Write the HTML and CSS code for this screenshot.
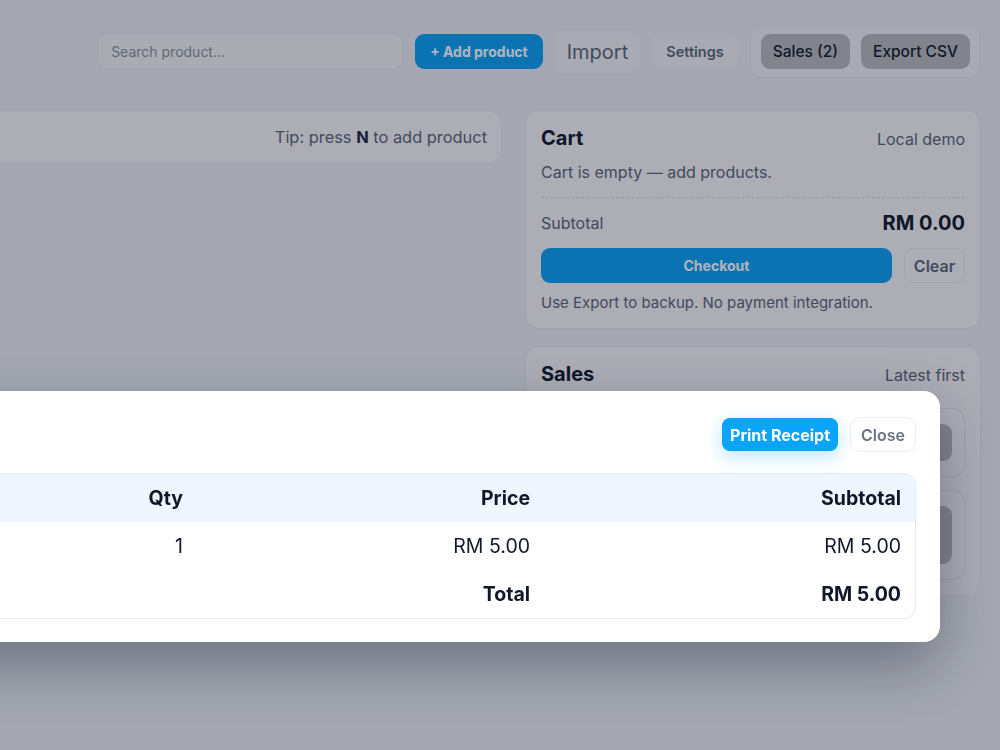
FILE: index.html
```html
<!DOCTYPE html>
<html lang="en">
<head>
    <meta charset="UTF-8">
    <meta name="viewport" content="width=device-width, initial-scale=1.0">
    <title>Kedai POS</title>
    <link rel="stylesheet" href="styles.css">
</head>
<body>
    <div class="app">
        <header class="topbar">
            <div class="brand"></div>
            <div class="actions">
                <input class="search" type="text" placeholder="Search product...">
                <button class="btn btn-primary">+ Add product</button>
                <button class="btn btn-import">Import</button>
                <button class="btn btn-light">Settings</button>
                <div class="btn-group">
                    <button class="btn btn-grey">Sales (2)</button>
                    <button class="btn btn-grey">Export CSV</button>
                </div>
            </div>
        </header>

        <main class="layout">
            <section class="products">
                <div class="panel tip-bar">
                    <span class="tip">Tip: press <b>N</b> to add product</span>
                </div>
            </section>

            <aside class="side">
                <div class="panel card">
                    <div class="card-head">
                        <h2>Cart</h2>
                        <span>Local demo</span>
                    </div>
                    <p class="empty">Cart is empty — add products.</p>
                    <div class="divider"></div>
                    <div class="subtotal">
                        <span>Subtotal</span>
                        <strong>RM 0.00</strong>
                    </div>
                    <div class="cart-actions">
                        <button class="btn btn-checkout">Checkout</button>
                        <button class="btn btn-clear">Clear</button>
                    </div>
                    <p class="note">Use Export to backup. No payment integration.</p>
                </div>

                <div class="panel card">
                    <div class="card-head">
                        <h2>Sales</h2>
                        <span>Latest first</span>
                    </div>
                    <div class="sale-list">
                        <div class="sale-item">
                            <div>
                                <div class="sale-no">#2 · RM 5.00</div>
                                <div class="sale-date">12/05/2024, 10:42</div>
                            </div>
                            <button class="btn btn-grey btn-view">View</button>
                        </div>
                        <div class="sale-item">
                            <div>
                                <div class="sale-no">#1 · RM 12.00</div>
                                <div class="sale-date">12/05/2024, 09:15</div>
                                <div class="sale-date">3 items</div>
                            </div>
                            <button class="btn btn-grey btn-view tall">View</button>
                        </div>
                    </div>
                </div>
            </aside>
        </main>
    </div>

    <div class="overlay">
        <div class="modal">
            <div class="modal-head">
                <div class="modal-actions">
                    <button class="btn btn-print">Print Receipt</button>
                    <button class="btn btn-close">Close</button>
                </div>
            </div>
            <table class="receipt">
                <thead>
                    <tr>
                        <th class="col-item"></th>
                        <th class="col-qty">Qty</th>
                        <th class="col-price">Price</th>
                        <th class="col-sub">Subtotal</th>
                    </tr>
                </thead>
                <tbody>
                    <tr>
                        <td class="col-item"></td>
                        <td>1</td>
                        <td>RM 5.00</td>
                        <td>RM 5.00</td>
                    </tr>
                    <tr class="total-row">
                        <td class="col-item"></td>
                        <td></td>
                        <td>Total</td>
                        <td>RM 5.00</td>
                    </tr>
                </tbody>
            </table>
        </div>
    </div>
</body>
</html>
```

FILE: styles.css
```css
body {
    margin: 0;
    font-family: Inter, "Noto Sans", sans-serif;
    background: #eceef2;
    color: #0f172a;
    overflow: hidden;
}

/* the page is wider than the window, left part is cut off */
.app {
    width: 1420px;
    margin-left: -439px;
}

.btn {
    font-family: inherit;
    border: 0;
    border-radius: 9px;
    cursor: pointer;
}

.topbar {
    display: flex;
    justify-content: space-between;
    align-items: center;
    padding-top: 25px;
}
.actions {
    display: flex;
    align-items: center;
    gap: 12px;
}
.search {
    width: 306px;
    height: 37px;
    box-sizing: border-box;
    padding: 0 13px;
    border: 1px solid #e3e5ea;
    border-radius: 10px;
    background: #f3f3f5;
    font: 14px Inter, sans-serif;
}
.search::placeholder {
    color: #8a8f99;
}
.btn-primary {
    height: 35px;
    padding: 0 15px;
    background: #0aa0f2;
    color: #fff;
    font-size: 14px;
    font-weight: 700;
}
.btn-import {
    height: 42px;
    padding: 0 12px;
    background: #f1f2f4;
    color: #5b6475;
    font-size: 20px;
}
.btn-light {
    height: 35px;
    padding: 0 14px;
    background: #f1f2f4;
    color: #5b6475;
    font-size: 14.5px;
    font-weight: 600;
}
.btn-group {
    display: flex;
    gap: 11px;
    padding: 8px 10px;
    border: 1px solid #e2e5ec;
    border-radius: 12px;
    background: #f1f2f5;
}
.btn-grey {
    height: 35px;
    padding: 0 12px;
    background: #b8b8bc;
    color: #111827;
    font-size: 15.5px;
    font-weight: 500;
}

.layout {
    display: grid;
    grid-template-columns: 1fr 456px;
    gap: 23px;
    margin-top: 32px;
}
.panel {
    background: #f6f5f6;
    border: 1px solid #e4e6eb;
    border-radius: 14px;
}
.tip-bar {
    display: flex;
    justify-content: flex-end;
    align-items: center;
    height: 54px;
    box-sizing: border-box;
    padding: 0 14px;
}
.tip {
    font-size: 16.4px;
    color: #5b6475;
}
.tip b {
    color: #1e293b;
}

.side {
    display: flex;
    flex-direction: column;
    gap: 17px;
}
.card {
    padding: 15px;
}
.card-head {
    display: flex;
    justify-content: space-between;
    align-items: baseline;
}
.card-head h2 {
    margin: 0;
    font-size: 20px;
    line-height: 24px;
    font-weight: 700;
}
.card-head span {
    font-size: 16px;
    color: #5b6475;
}
.empty {
    margin: 10px 0 0;
    font-size: 16px;
    line-height: 24px;
    color: #5b6475;
}
.divider {
    margin-top: 13px;
    border-top: 1px dashed #d5d8df;
}
.subtotal {
    display: flex;
    justify-content: space-between;
    align-items: center;
    height: 24px;
    margin-top: 13px;
    font-size: 16px;
    color: #5b6475;
}
.subtotal strong {
    font-size: 20px;
    color: #0f172a;
}
.cart-actions {
    display: flex;
    gap: 12px;
    margin-top: 13px;
}
.btn-checkout {
    flex: 1;
    height: 35px;
    background: #0aa0f2;
    color: #fff;
    font-size: 14px;
    font-weight: 700;
}
.btn-clear {
    height: 35px;
    padding: 0 9px;
    background: #f7f7f8;
    border: 1px solid #e6e7eb;
    color: #5b6475;
    font-size: 16px;
    font-weight: 600;
}
.note {
    margin: 10px 0 0;
    font-size: 15px;
    line-height: 20px;
    color: #5b6475;
}

.sale-list {
    display: flex;
    flex-direction: column;
    gap: 13px;
    margin-top: 22px;
}
.sale-item {
    display: flex;
    justify-content: space-between;
    align-items: center;
    padding: 15px 12px 15px 14px;
    border: 1px solid #e2e4ea;
    border-radius: 12px;
    background: #f7f7f8;
}
.sale-no {
    font-size: 15px;
    font-weight: 600;
}
.sale-date {
    font-size: 13px;
    color: #5b6475;
}
.btn-view {
    height: 37px;
}
.btn-view.tall {
    height: 58px;
}

.overlay {
    position: fixed;
    inset: 0;
    display: flex;
    justify-content: flex-end;
    align-items: flex-start;
    padding: 391px 60px 0 0;
    background: rgba(15, 23, 42, 0.32);
}
.modal {
    flex-shrink: 0;
    width: 1180px;
    box-sizing: border-box;
    padding: 26px 24px 23px;
    background: #fff;
    border-radius: 16px;
    box-shadow: 0 24px 60px rgba(15, 23, 42, 0.36);
}
.modal-head {
    display: flex;
    justify-content: flex-end;
    align-items: center;
}
.modal-actions {
    display: flex;
    align-items: center;
    gap: 12px;
}
.btn-print {
    height: 33px;
    padding: 0 8px;
    border-radius: 8px;
    background: #0aa4fb;
    color: #fff;
    font-size: 16px;
    font-weight: 700;
    box-shadow: 0 6px 18px rgba(14, 165, 233, 0.28);
}
.btn-close {
    height: 35px;
    padding: 0 10px;
    border: 1px solid #eceef2;
    border-radius: 10px;
    background: #fff;
    color: #6b7280;
    font-size: 16px;
    font-weight: 600;
}

.receipt {
    width: 100%;
    margin-top: 21px;
    table-layout: fixed;
    border-collapse: separate;
    border-spacing: 0;
    border: 1px solid #dfe8f4;
    border-radius: 12px;
    overflow: hidden;
    font-size: 19.5px;
}
.receipt th,
.receipt td {
    padding: 12px 14px;
    line-height: 24px;
    text-align: right;
}
.receipt th {
    background: #eff6ff;
    font-weight: 700;
}
.receipt td {
    color: #111827;
}
.col-qty { width: 132px; }
.col-price { width: 319px; }
.col-sub { width: 343px; }
.total-row td {
    font-weight: 700;
}
```
